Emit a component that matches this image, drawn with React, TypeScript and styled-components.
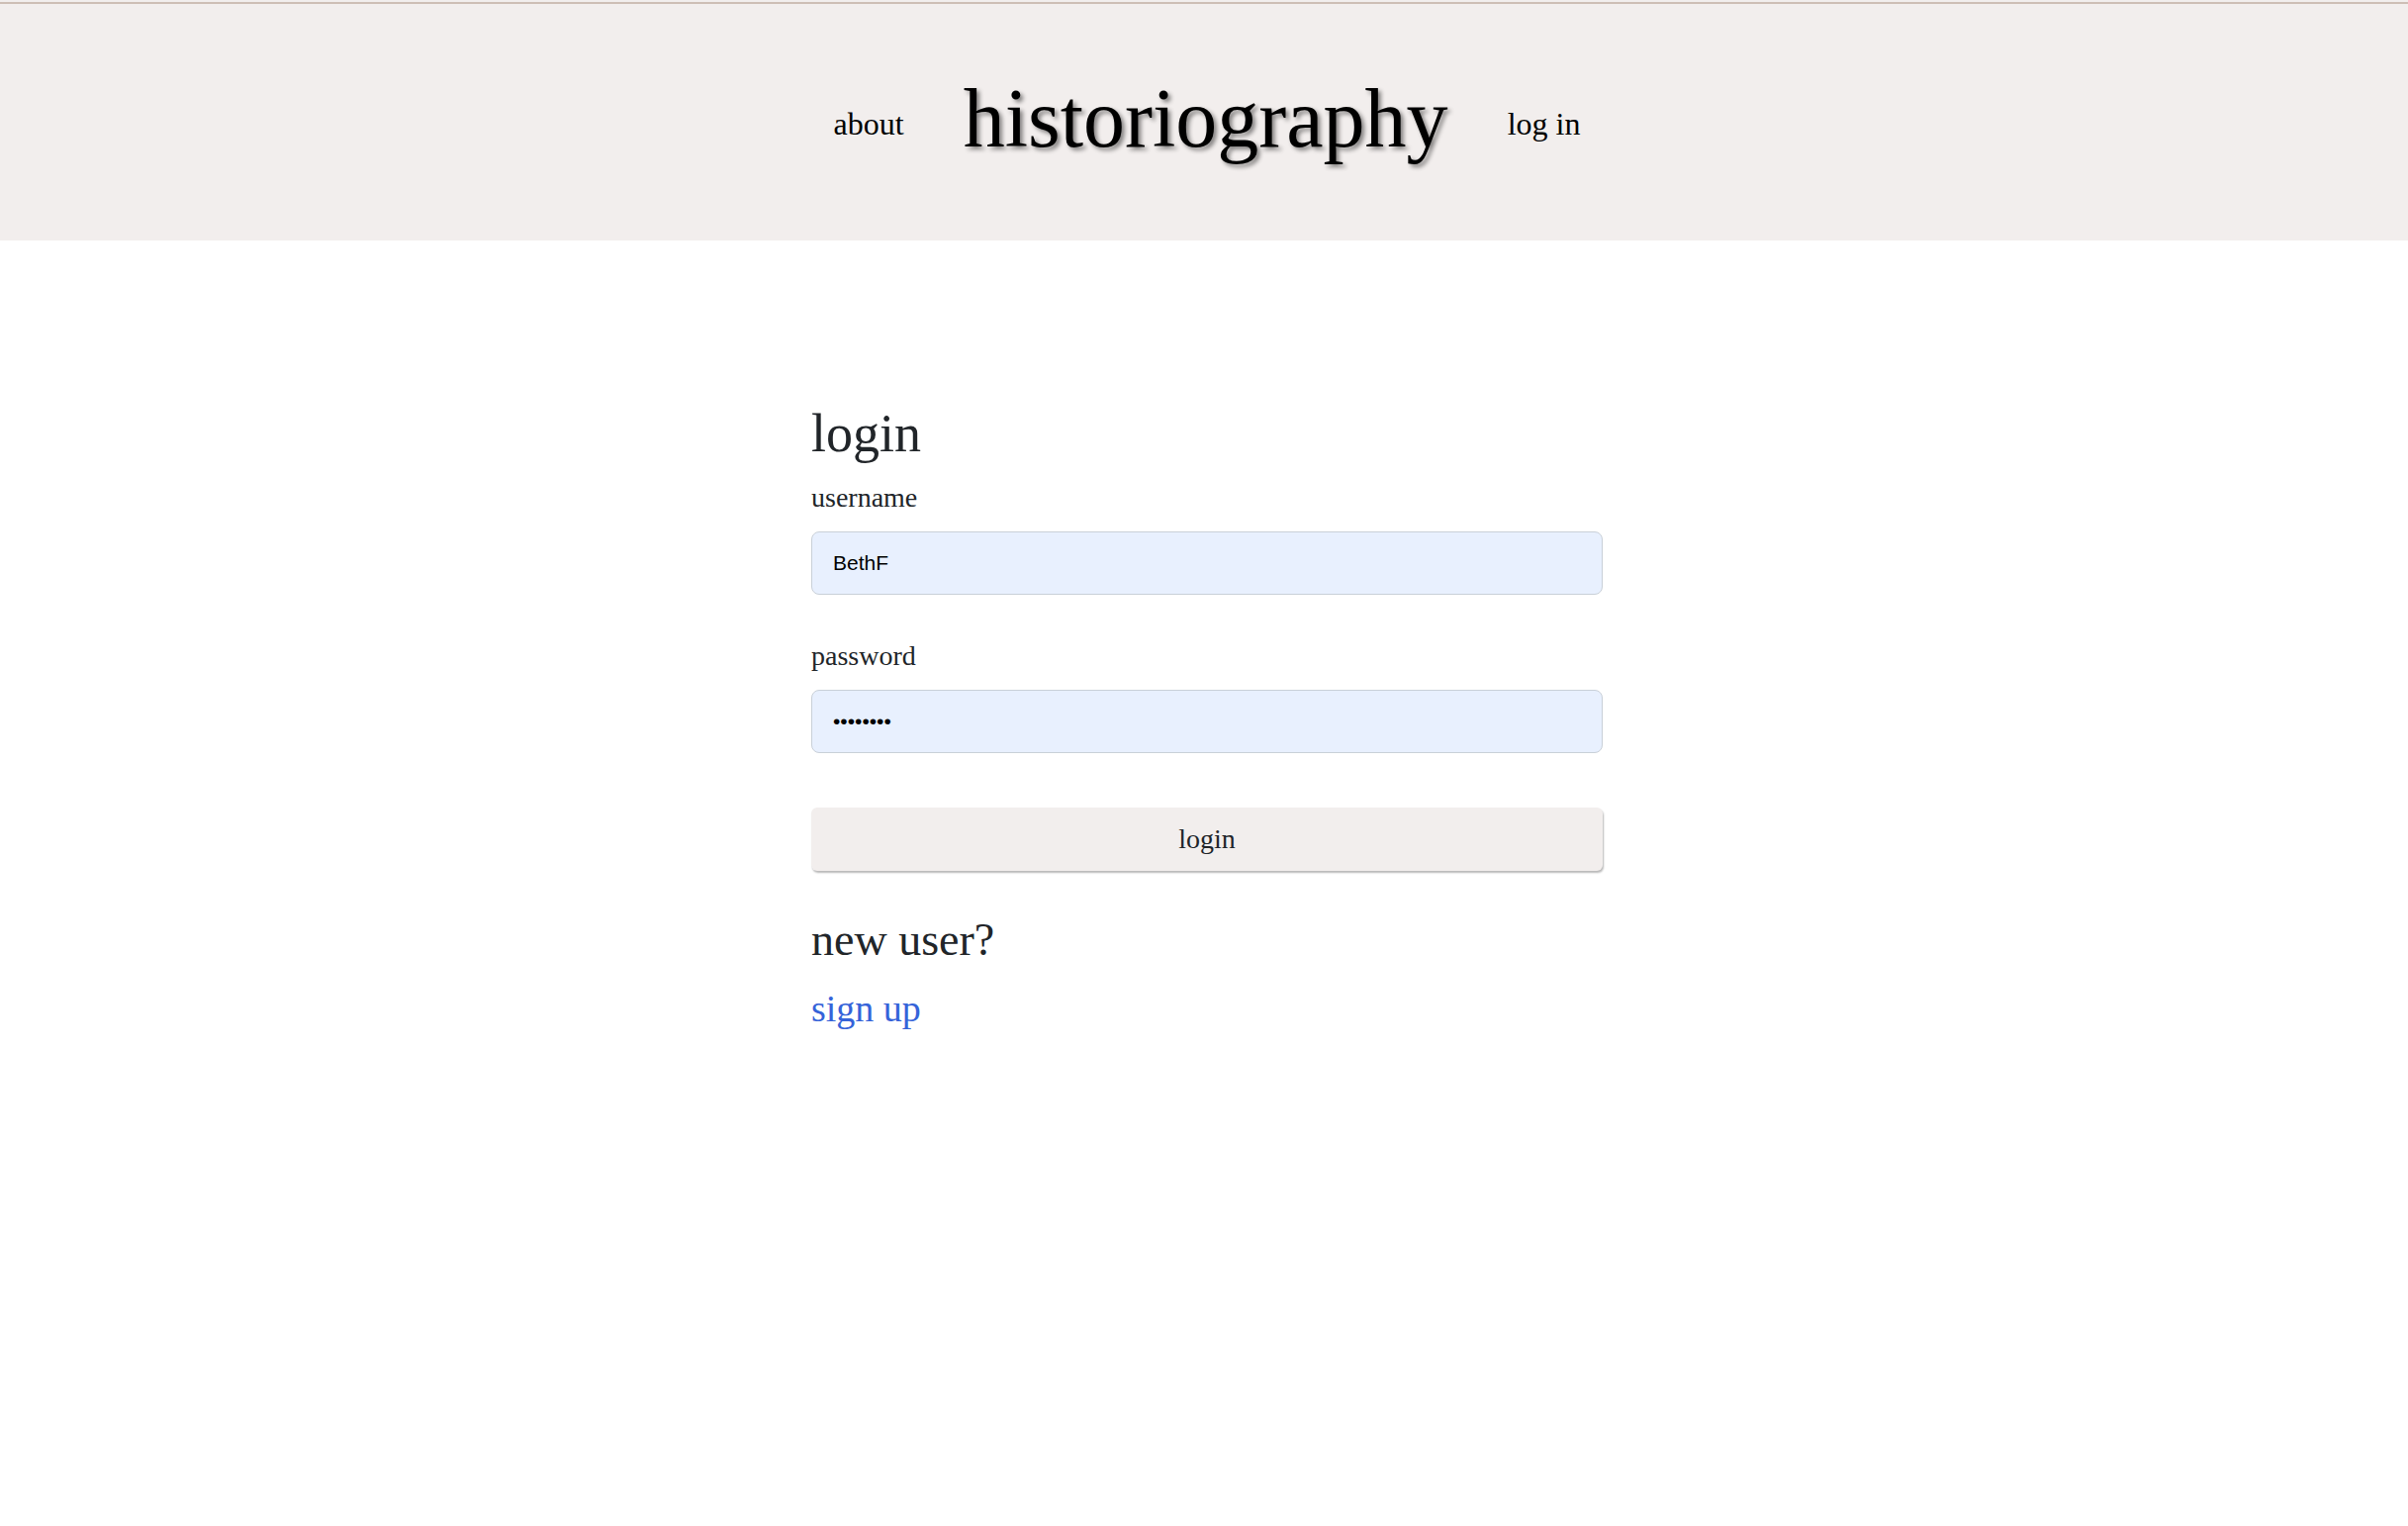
import React from 'react';
import styled, { createGlobalStyle } from 'styled-components';

const GlobalStyle = createGlobalStyle`
	html, body {
		margin: 0;
		padding: 0;
		background: #ffffff;
	}
	body {
		font-family: 'Liberation Serif', 'Times New Roman', serif;
		color: #212529;
	}
	* {
		box-sizing: border-box;
	}
`;

const Header = styled.header`
	height: 243px;
	padding: 0 0 5px 6px;
	display: flex;
	justify-content: center;
	align-items: center;
	gap: 60px;
	background-color: #f2eeed;
	/* thin rule along the very top of the page */
	background-image: linear-gradient(
		to bottom,
		#f2eeed 0,
		#f2eeed 2px,
		#cdbeb5 2px,
		#cdbeb5 4px,
		#f2eeed 4px
	);
`;

const NavLink = styled.a`
	font-family: 'Liberation Serif', serif;
	font-size: 32px;
	line-height: normal;
	color: #000000;
	text-decoration: none;
	padding-top: 13px;
	cursor: pointer;
`;

const SiteTitle = styled.h1`
	margin: 0;
	font-family: 'Liberation Serif', serif;
	font-size: 84px;
	font-weight: 400;
	line-height: normal;
	color: #000000;
	text-shadow: 3px 3px 4px rgba(0, 0, 0, 0.45);
`;

const Main = styled.main`
	width: 800px;
	margin: 163px 0 0 calc(50% - 397px);
	display: flex;
	flex-direction: column;
`;

const Heading = styled.h2`
	margin: 0 0 11px;
	font-size: 54px;
	font-weight: 400;
	line-height: 1.2;
	color: #212529;
`;

const Field = styled.div`
	display: flex;
	flex-direction: column;
	gap: 13px;
	margin-bottom: ${(p: { $space: number }) => p.$space}px;
`;

const Label = styled.label`
	font-size: 28px;
	line-height: 1.5;
	color: #212529;
`;

const Input = styled.input`
	width: 100%;
	height: 64px;
	padding: 0 21px;
	border: 1px solid #c9d0d8;
	border-radius: 8px;
	background-color: #e8f0fe;
	font-family: 'Liberation Sans', Arial, sans-serif;
	font-size: 21px;
	color: #000000;
	outline: none;
`;

const Button = styled.button`
	width: 100%;
	height: 64px;
	border: none;
	border-radius: 6px;
	background-color: #f2eeed;
	box-shadow: 1px 2px 2px rgba(0, 0, 0, 0.28);
	font-family: 'Liberation Serif', serif;
	font-size: 28px;
	color: #212529;
	cursor: pointer;
`;

const SubHeading = styled.h3`
	margin: 42px 0 14px;
	font-size: 46px;
	font-weight: 400;
	line-height: 1.2;
	color: #212529;
`;

const SignUp = styled.a`
	font-size: 38px;
	line-height: 1.5;
	color: #3563d9;
	text-decoration: none;
	cursor: pointer;
`;

export default function App() {
	return (
		<>
			<GlobalStyle />
			<Header>
				<NavLink>about</NavLink>
				<SiteTitle>historiography</SiteTitle>
				<NavLink>log in</NavLink>
			</Header>
			<Main>
				<Heading>login</Heading>
				<Field $space={41}>
					<Label htmlFor='username'>username</Label>
					<Input id='username' type='text' defaultValue='BethF' />
				</Field>
				<Field $space={55}>
					<Label htmlFor='password'>password</Label>
					<Input id='password' type='password' defaultValue='12345678' />
				</Field>
				<Button type='button'>login</Button>
				<SubHeading>new user?</SubHeading>
				<div>
					<SignUp>sign up</SignUp>
				</div>
			</Main>
		</>
	);
}
